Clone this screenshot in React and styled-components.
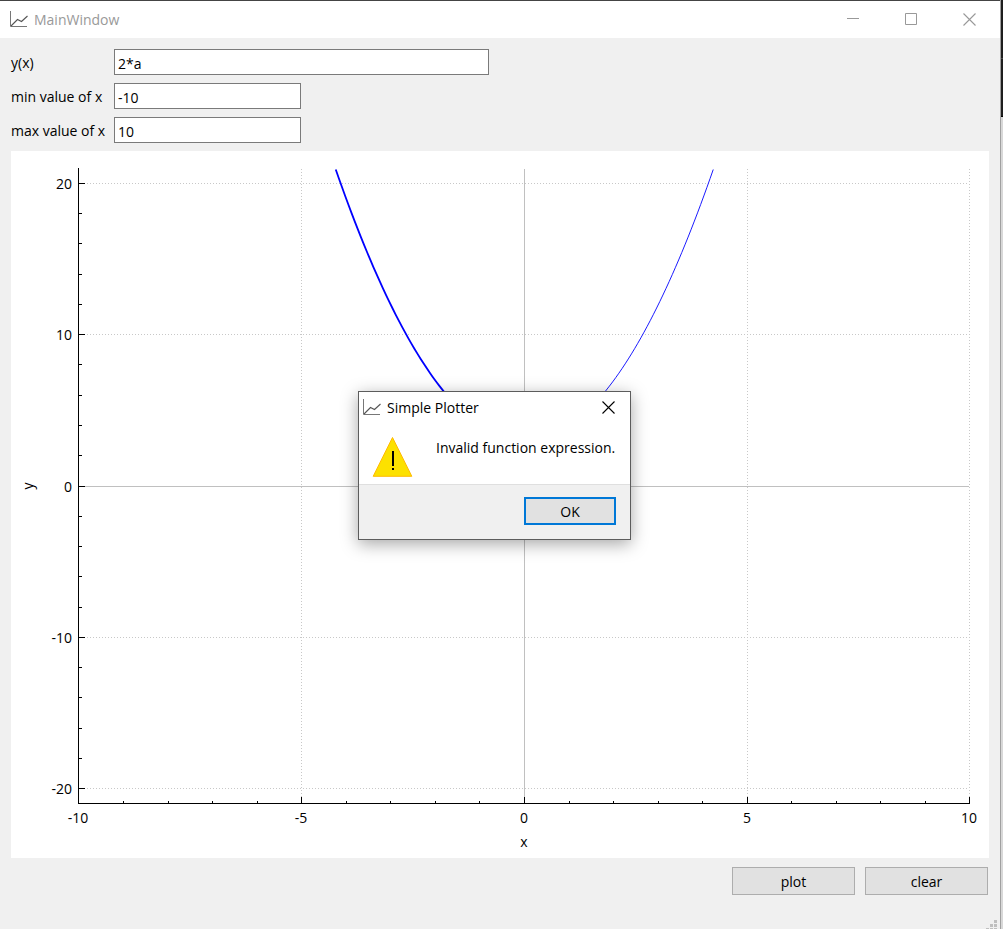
import React, { useLayoutEffect, useRef, useState } from "react";
import styled, { createGlobalStyle } from "styled-components";

const GlobalStyle = createGlobalStyle`
  *, *::before, *::after { box-sizing: border-box; }
  body {
    margin: 0;
    font-family: "Open Sans", "Noto Sans", sans-serif;
    font-size: 14px;
    line-height: 20px;
    color: #000;
  }
`;

const Desktop = styled.div`
  display: grid;
  grid-template-columns: 1fr 3px;
  min-height: 100vh;
`;

const DesktopEdge = styled.div`
  border-left: 1px solid #a0a0a0;
  background: linear-gradient(#1e1e1e 0 58px, #4a4a4a 58px 59px, #1e1e1e 59px 116px, #000 116px 117px, #d8d8d8 117px);
`;

const Window = styled.div`
  position: relative;
  display: flex;
  flex-direction: column;
  min-width: 0;
  border-top: 1px solid #444;
  background: #f0f0f0;
`;

const TitleBar = styled.header`
  display: flex;
  align-items: center;
  height: ${(p) => (p.$dialog ? 32 : 37)}px;
  padding: ${(p) => (p.$dialog ? "0 0 0 4px" : "0 2px 0 10px")};
  background: #fff;
  color: ${(p) => (p.$dialog ? "#000" : "#999")};
`;

const Title = styled.h1`
  flex: 1;
  margin: 0 0 0 6px;
  font-size: 14px;
  font-weight: 400;
`;

const CaptionButton = styled.button`
  display: grid;
  place-items: center;
  width: ${(p) => (p.$dialog ? 43 : 58)}px;
  height: 100%;
  padding: 0 0 1px;
  border: 0;
  background: transparent;
  color: inherit;
`;

const Content = styled.main`
  flex: 1;
  display: flex;
  flex-direction: column;
  gap: 8px;
  padding: 11px 11px 0;
`;

const Form = styled.form`
  display: grid;
  grid-template-columns: 95px 1fr;
  gap: 8px;
  align-items: center;
`;

const Label = styled.label`
  padding-top: 2px;
  white-space: nowrap;
`;

const TextBox = styled.input`
  width: ${(p) => (p.$wide ? 375 : 187)}px;
  height: 26px;
  padding: 2px 3px 0;
  border: 1px solid #7a7a7a;
  background: #fff;
  color: #000;
  font: inherit;
  outline: none;
`;

const PlotArea = styled.div`
  flex: 1;
  min-height: 300px;
  position: relative;
  background: #fff;
`;

const PlotSvg = styled.svg`
  position: absolute;
  inset: 0;
  width: 100%;
  height: 100%;
  font-size: 14px;
`;

const Actions = styled.div`
  display: flex;
  justify-content: flex-end;
  gap: 10px;
  padding: 1px 1px 0 0;
`;

const PushButton = styled.button`
  width: ${(p) => (p.$primary ? 92 : 123)}px;
  height: 28px;
  padding: 2px 0 0;
  border: ${(p) => (p.$primary ? "2px solid #0078d7" : "1px solid #adadad")};
  background: #e1e1e1;
  color: #000;
  font: inherit;
  outline: none;
`;

const StatusBar = styled.footer`
  display: flex;
  justify-content: flex-end;
  align-items: flex-end;
  height: 34px;
  padding-right: 3px;
`;

const Overlay = styled.div`
  position: absolute;
  inset: 0;
  display: grid;
  place-items: center;
  padding-right: 11px;
  pointer-events: none;
`;

const Dialog = styled.section`
  width: 273px;
  border: 1px solid #5c5c5c;
  background: #fff;
  box-shadow: 0 4px 16px rgba(0, 0, 0, 0.35);
  pointer-events: auto;
`;

const DialogBody = styled.div`
  display: flex;
  gap: 23px;
  height: 60px;
  padding: 12px 13px 0;
`;

const Message = styled.p`
  margin: 2px 0 0;
  white-space: nowrap;
`;

const DialogFooter = styled.div`
  display: flex;
  justify-content: flex-end;
  align-items: flex-start;
  height: 55px;
  padding: 12px 14px 0;
  border-top: 1px solid #dfdfdf;
  background: #f0f0f0;
`;

function ChartIcon() {
  return (
    <svg width="18" height="18" viewBox="0 0 18 18" fill="none" aria-hidden="true">
      <path d="M0.5 0V15.5H17" stroke="#777" />
      <path d="M1 15L7.5 8.5L11.5 10.5L17.5 5" stroke="#555" strokeWidth="1.1" />
    </svg>
  );
}

function CloseIcon() {
  return (
    <svg width="13" height="13" viewBox="0 0 13 13" fill="none" stroke="currentColor" strokeWidth="1.1" aria-hidden="true">
      <path d="M0.5 0.5L12.5 12.5M12.5 0.5L0.5 12.5" />
    </svg>
  );
}

function MinimizeIcon() {
  return (
    <svg width="12" height="12" viewBox="0 0 12 12" fill="none" stroke="currentColor" aria-hidden="true">
      <path d="M0 5.5H12" />
    </svg>
  );
}

function MaximizeIcon() {
  return (
    <svg width="12" height="12" viewBox="0 0 12 12" fill="none" stroke="currentColor" aria-hidden="true">
      <path d="M0.5 0.5H11.5V11.5H0.5Z" />
    </svg>
  );
}

function WarningIcon() {
  return (
    <svg width="41" height="41" viewBox="0 0 41 41" aria-hidden="true">
      <path d="M20.5 1.5L39.8 40.3H1.2Z" fill="#fce100" stroke="#ffb900" />
      <path d="M20 15H22V30H20ZM20 32H22V34H20Z" fill="#000" />
    </svg>
  );
}

function SizeGrip() {
  return (
    <svg width="11" height="9" viewBox="0 0 11 9" fill="#bfbfbf" aria-hidden="true">
      <path d="M8 0h3v3h-3zM8 4h3v3h-3zM4 4h3v3h-3zM8 8h3v1h-3zM4 8h3v1h-3zM0 8h3v1h-3z" />
    </svg>
  );
}

const X_RANGE = 10;
const Y_RANGE = 20.95;
const MARGIN = { left: 67, right: 19, top: 18, bottom: 54 };
const range = (from, to, step) => {
  const out = [];
  for (let v = from; v <= to; v += step) out.push(v);
  return out;
};

function Plot() {
  const ref = useRef(null);
  const [size, setSize] = useState({ w: 978, h: 707 });

  useLayoutEffect(() => {
    const measure = () => {
      const box = ref.current.getBoundingClientRect();
      setSize({ w: Math.round(box.width), h: Math.round(box.height) });
    };
    measure();
    const observer = new ResizeObserver(measure);
    observer.observe(ref.current);
    return () => observer.disconnect();
  }, []);

  const left = MARGIN.left;
  const right = size.w - MARGIN.right - 1;
  const top = MARGIN.top;
  const bottom = size.h - MARGIN.bottom - 1;
  const px = (x) => left + ((x + X_RANGE) / (2 * X_RANGE)) * (right - left);
  const py = (y) => bottom - ((y + Y_RANGE) / (2 * Y_RANGE)) * (bottom - top);
  const column = (x) => Math.ceil(px(x)) + 0.5;
  const row = (y) => Math.floor(py(y)) + 0.5;
  const edge = Math.sqrt(Y_RANGE - 3);
  const curve = (from, to) =>
    range(0, 60, 1)
      .map((i) => {
        const x = from + ((to - from) * i) / 60;
        return `${px(x) + 1},${py(x * x + 3) + 0.5}`;
      })
      .join(" ");
  const xMajor = range(-10, 10, 5);
  const yMajor = range(-20, 20, 10);

  return (
    <PlotArea ref={ref}>
      <PlotSvg role="img" aria-label="Graph of y over x">
        <g stroke="#c8c8c8" fill="none">
          {xMajor.slice(1).map((x) => (
            <path key={x} d={`M${column(x)} ${top}V${bottom}`} stroke={x === 0 ? "#c0c0c0" : undefined} strokeDasharray={x === 0 ? undefined : "1 2"} />
          ))}
          {yMajor.map((y) => (
            <path key={y} d={`M${left} ${row(y)}H${right}`} stroke={y === 0 ? "#c0c0c0" : undefined} strokeDasharray={y === 0 ? undefined : "1 2"} />
          ))}
        </g>
        <g stroke="#00f" fill="none">
          <polyline points={curve(-edge, 0)} strokeWidth="1.8" />
          <polyline points={curve(0, edge)} strokeWidth="0.9" />
        </g>
        <g stroke="#000" fill="none">
          <path d={`M${left + 0.5} ${top - 1}V${bottom + 0.5}H${right + 1}`} />
          {range(-10, 10, 1).map((x) => (
            <path key={x} d={`M${column(x)} ${bottom + 1}v${x % 5 === 0 ? -7 : -3}`} />
          ))}
          {range(-20, 20, 2).map((y) => (
            <path key={y} d={`M${left} ${row(y)}h${y % 10 === 0 ? 7 : 4}`} />
          ))}
        </g>
        {xMajor.map((x) => (
          <text key={x} x={Math.ceil(px(x))} y={bottom + 20} textAnchor="middle">{x}</text>
        ))}
        {yMajor.map((y) => (
          <text key={y} x={left - 6} y={Math.floor(py(y)) + 6} textAnchor="end">{y}</text>
        ))}
        <text x={Math.ceil(px(0))} y={bottom + 44} textAnchor="middle">x</text>
        <text transform={`translate(22 ${Math.round(py(0))}) rotate(-90)`} textAnchor="middle">y</text>
      </PlotSvg>
    </PlotArea>
  );
}

export default function App() {
  return (
    <>
      <GlobalStyle />
      <Desktop>
        <Window>
          <TitleBar>
            <ChartIcon />
            <Title>MainWindow</Title>
            <CaptionButton aria-label="Minimize"><MinimizeIcon /></CaptionButton>
            <CaptionButton aria-label="Maximize"><MaximizeIcon /></CaptionButton>
            <CaptionButton aria-label="Close"><CloseIcon /></CaptionButton>
          </TitleBar>
          <Content>
            <Form>
              <Label htmlFor="expression">y(x)</Label>
              <TextBox id="expression" $wide defaultValue="2*a" />
              <Label htmlFor="min-x">min value of x</Label>
              <TextBox id="min-x" defaultValue="-10" />
              <Label htmlFor="max-x">max value of x</Label>
              <TextBox id="max-x" defaultValue="10" />
            </Form>
            <Plot />
            <Actions>
              <PushButton>plot</PushButton>
              <PushButton>clear</PushButton>
            </Actions>
          </Content>
          <StatusBar><SizeGrip /></StatusBar>
          <Overlay>
            <Dialog role="alertdialog" aria-labelledby="dialog-title" aria-describedby="dialog-message">
              <TitleBar $dialog>
                <ChartIcon />
                <Title as="h2" id="dialog-title">Simple Plotter</Title>
                <CaptionButton $dialog aria-label="Close dialog"><CloseIcon /></CaptionButton>
              </TitleBar>
              <DialogBody>
                <WarningIcon />
                <Message id="dialog-message">Invalid function expression.</Message>
              </DialogBody>
              <DialogFooter>
                <PushButton $primary>OK</PushButton>
              </DialogFooter>
            </Dialog>
          </Overlay>
        </Window>
        <DesktopEdge />
      </Desktop>
    </>
  );
}
